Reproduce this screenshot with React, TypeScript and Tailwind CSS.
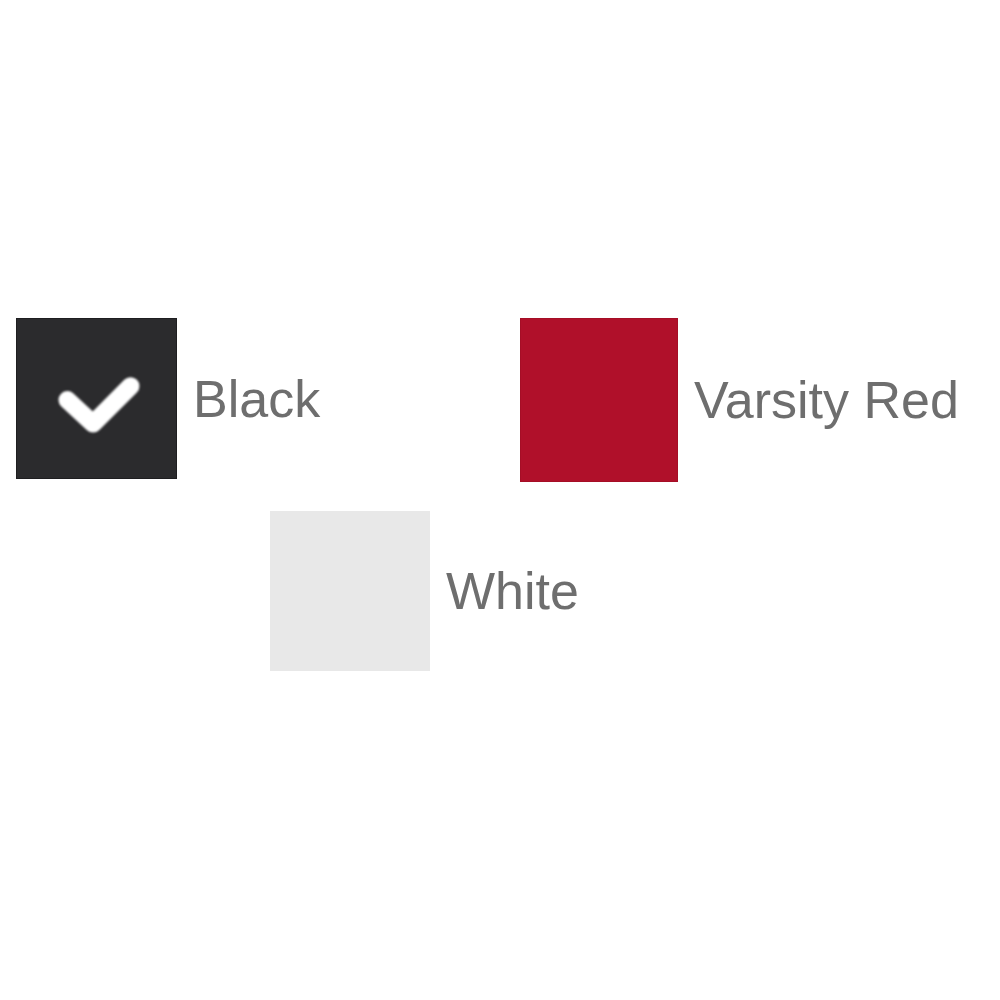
import React from "react";

type Swatch = {
	name: string;
	box: string;
	selected?: boolean;
};

const rowOne: Swatch[] = [
	{ name: "Black", box: "w-[161px] h-[161px] bg-[#2b2b2d] border border-[#1e1e20]", selected: true },
	{ name: "Varsity Red", box: "w-[158px] h-[164px] bg-[#b0102a] border border-[#a50e26]" },
];

const rowTwo: Swatch[] = [{ name: "White", box: "w-[160px] h-[160px] bg-[#e8e8e8]" }];

function Check() {
	return (
		<svg width="161" height="161" viewBox="0 0 161 161" className="blur-[1.2px]">
			<path
				d="M51 82 L77 106 L115 68"
				fill="none"
				stroke="#ffffff"
				strokeWidth="18"
				strokeLinecap="round"
				strokeLinejoin="round"
			/>
		</svg>
	);
}

function ColorOption({ swatch, width }: { swatch: Swatch; width?: string }) {
	return (
		<div className={`flex items-center gap-4 ${width ?? ""}`}>
			<div className={`shrink-0 flex items-center justify-center ${swatch.box}`}>
				{swatch.selected && <Check />}
			</div>
			<span className="text-[52px] text-[#6e6e6e] font-['Liberation_Sans',Arial,sans-serif] leading-[58px] whitespace-nowrap">
				{swatch.name}
			</span>
		</div>
	);
}

export default function App() {
	return (
		<div className="w-[1000px] h-[1000px] bg-white pt-[318px]">
			<div className="flex items-start pl-[16px]">
				<ColorOption swatch={rowOne[0]} width="w-[504px]" />
				<ColorOption swatch={rowOne[1]} />
			</div>
			<div className="flex items-start pl-[270px] mt-[29px]">
				{rowTwo.map((s) => (
					<ColorOption key={s.name} swatch={s} />
				))}
			</div>
		</div>
	);
}
